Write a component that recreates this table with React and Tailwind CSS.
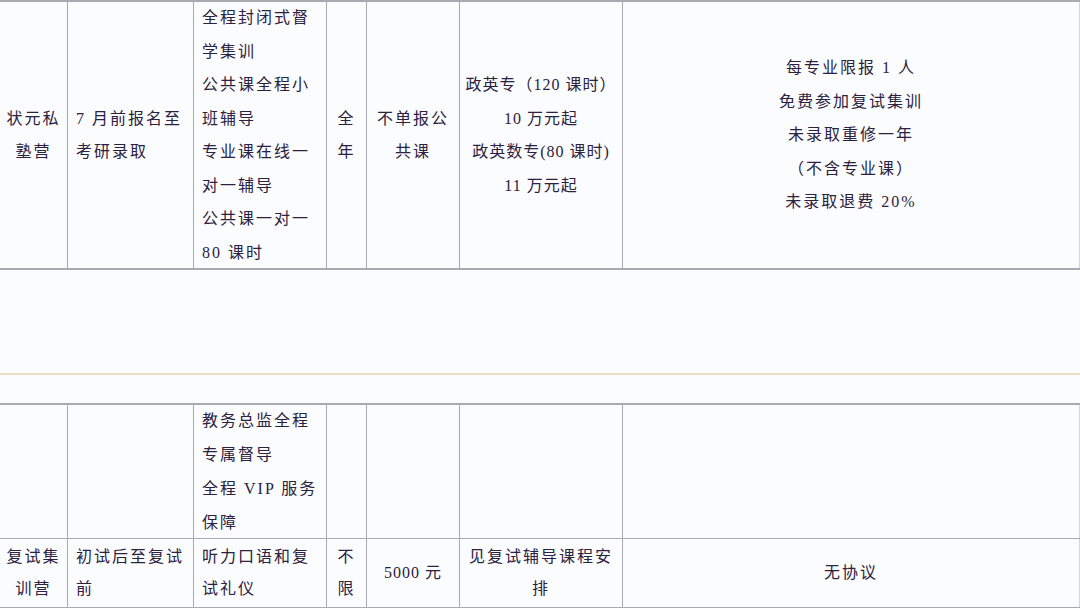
import React from 'react';

const widths = ['w-[68px]', 'w-[126px]', 'w-[133px]', 'w-[40px]', 'w-[93px]', 'w-[163px]', 'flex-1'];

const topRow = [
  { lines: ['状元私', '塾营'], align: 'center' },
  { lines: ['7 月前报名至', '考研录取'], align: 'left' },
  {
    lines: [
      '全程封闭式督',
      '学集训',
      '公共课全程小',
      '班辅导',
      '专业课在线一',
      '对一辅导',
      '公共课一对一',
      '80 课时',
    ],
    align: 'left',
  },
  { lines: ['全', '年'], align: 'center' },
  { lines: ['不单报公', '共课'], align: 'center' },
  {
    lines: ['政英专（120 课时）', '10 万元起', '政英数专(80 课时)', '11 万元起'],
    align: 'center',
    tight: true,
  },
  {
    lines: ['每专业限报 1 人', '免费参加复试集训', '未录取重修一年', '（不含专业课）', '未录取退费 20%'],
    align: 'center',
  },
];

const midRow = [
  { lines: [] },
  { lines: [] },
  { lines: ['教务总监全程', '专属督导', '全程 VIP 服务', '保障'], align: 'left' },
  { lines: [] },
  { lines: [] },
  { lines: [] },
  { lines: [] },
];

const lastRow = [
  { lines: ['复试集', '训营'], align: 'center' },
  { lines: ['初试后至复试', '前'], align: 'left' },
  { lines: ['听力口语和复', '试礼仪'], align: 'left' },
  { lines: ['不', '限'], align: 'center' },
  { lines: ['5000 元'], align: 'center', tight: true },
  { lines: ['见复试辅导课程安', '排'], align: 'center' },
  { lines: ['无协议'], align: 'center' },
];

function Row({ cells, height, leading, border }) {
  return (
    <div className={`flex ${height} ${border}`}>
      {cells.map((cell, i) => (
        <div
          key={i}
          className={`${widths[i]} shrink-0 flex flex-col justify-center ${
            i < cells.length - 1 ? 'border-r border-[#a9a9b2]' : 'border-r border-[#d4d4da]'
          } ${cell.align === 'left' ? 'items-start pl-2' : 'items-center'}`}
        >
          {cell.lines.map((line, j) => (
            <div
              key={j}
              className={`whitespace-nowrap ${cell.tight ? 'tracking-[1px]' : 'tracking-[2px]'} ${leading}`}
            >
              {line}
            </div>
          ))}
        </div>
      ))}
    </div>
  );
}

export default function App() {
  return (
    <div
      className="w-[1080px] h-[608px] overflow-hidden bg-[#fbfcfe] text-[#2b2140] text-[16px]"
      style={{ fontFamily: '"Liberation Serif", "Noto Sans CJK SC", serif' }}
    >
      <Row
        cells={topRow}
        height="h-[270px]"
        leading="leading-[33.5px]"
        border="border-t-2 border-b-2 border-[#a9a9b2]"
      />
      <div className="h-[103px]" />
      <div className="border-t-2 border-[#efdcc4]" />
      <div className="h-[28px]" />
      <div className="border-t-2 border-[#a9a9b2]">
        <Row cells={midRow} height="h-[134px]" leading="leading-[34px]" border="border-b border-[#a9a9b2]" />
        <Row cells={lastRow} height="h-[70px]" leading="leading-[32px]" border="border-b-2 border-[#a9a9b2]" />
      </div>
    </div>
  );
}
